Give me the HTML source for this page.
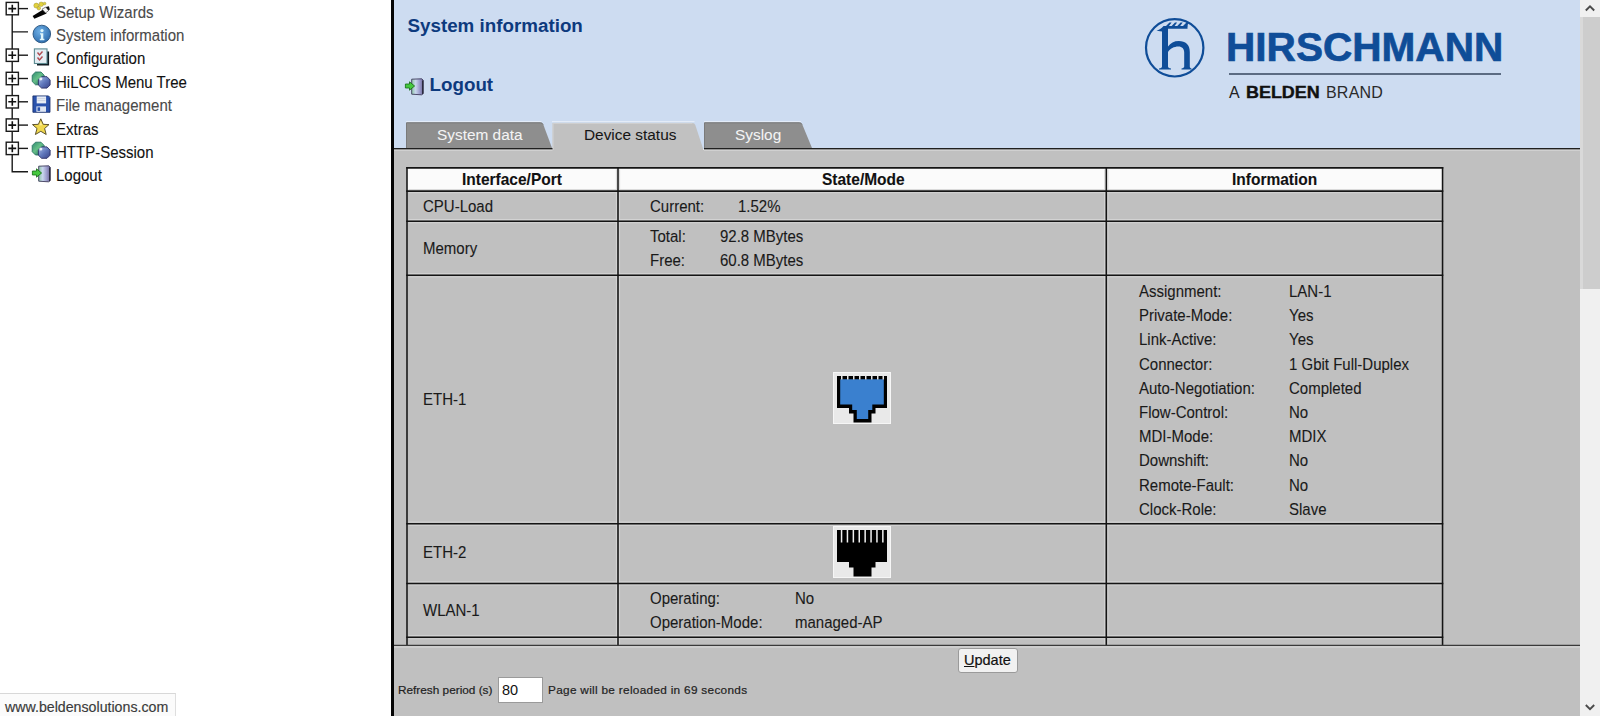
<!DOCTYPE html>
<html><head><meta charset="utf-8">
<style>
*{margin:0;padding:0;box-sizing:border-box}
html,body{width:1600px;height:716px;overflow:hidden;background:#fff;font-family:"Liberation Sans",sans-serif;color:#1a1a1a}
.a{position:absolute}
.t{position:absolute;white-space:nowrap;font-size:15px;line-height:18px}
/* tree */
.box{position:absolute;left:6px;width:13px;height:13px;border:1px solid #222;background:#fff}
.box:before{content:"";position:absolute;left:2px;top:5px;width:7px;height:1px;background:#111}
.box:after{content:"";position:absolute;left:5px;top:2px;width:1px;height:7px;background:#111}
.hl{position:absolute;height:1px;background:#222}
.vl{position:absolute;width:1px;background:#222}
.ico{position:absolute;left:32px;width:18px;height:18px}
.tt{position:absolute;left:56px;white-space:nowrap;font-size:15px;line-height:18px;color:#111;-webkit-text-stroke:0.1px currentColor;transform:translateY(0.6px) scaleY(1.08);transform-origin:0 8.8px}
.tg{color:#4a4a4a}
/* header */
#hdr{left:394px;top:0;width:1186px;height:149px;background:#cddcf1}
.tab{position:absolute;top:122px;height:25px;font-size:15.4px;line-height:25px;white-space:nowrap;-webkit-text-stroke:0.05px currentColor}
/* table */
.bl{position:absolute;background:#222}
.cell{position:absolute;font-size:15px;line-height:18px;white-space:nowrap;color:#1a1a1a;-webkit-text-stroke:0.1px currentColor;transform:translateY(0.6px) scaleY(1.08);transform-origin:0 8.8px}
</style></head><body>

<!-- LEFT TREE -->
<div class="a" style="left:0;top:0;width:391px;height:716px;background:#fff">
<svg class="a" style="left:0;top:0" width="30" height="190" viewBox="0 0 30 190"><g stroke="#1a1a1a" stroke-width="1.4" fill="none"><path d="M12.2,8.6 L12.2,171.7 L28,171.7 M12.2,31.9 L28,31.9"/><rect x="6.2" y="2.4" width="12.2" height="12.4" fill="#fff"/><path d="M18.4,8.6 L28,8.6"/><path d="M8.3,8.6 L16.2,8.6 M12.3,4.7 L12.3,12.5" stroke-width="1.6" stroke="#111"/><rect x="6.2" y="49.0" width="12.2" height="12.4" fill="#fff"/><path d="M18.4,55.2 L28,55.2"/><path d="M8.3,55.2 L16.2,55.2 M12.3,51.3 L12.3,59.1" stroke-width="1.6" stroke="#111"/><rect x="6.2" y="72.3" width="12.2" height="12.4" fill="#fff"/><path d="M18.4,78.5 L28,78.5"/><path d="M8.3,78.5 L16.2,78.5 M12.3,74.6 L12.3,82.4" stroke-width="1.6" stroke="#111"/><rect x="6.2" y="95.6" width="12.2" height="12.4" fill="#fff"/><path d="M18.4,101.8 L28,101.8"/><path d="M8.3,101.8 L16.2,101.8 M12.3,97.9 L12.3,105.7" stroke-width="1.6" stroke="#111"/><rect x="6.2" y="118.9" width="12.2" height="12.4" fill="#fff"/><path d="M18.4,125.1 L28,125.1"/><path d="M8.3,125.1 L16.2,125.1 M12.3,121.2 L12.3,129.0" stroke-width="1.6" stroke="#111"/><rect x="6.2" y="142.2" width="12.2" height="12.4" fill="#fff"/><path d="M18.4,148.4 L28,148.4"/><path d="M8.3,148.4 L16.2,148.4 M12.3,144.5 L12.3,152.3" stroke-width="1.6" stroke="#111"/></g></svg>
<!-- tree icons -->
<svg class="a" style="left:0;top:0" width="60" height="190" viewBox="0 0 60 190">
  <defs>
    <linearGradient id="gG" x1="0" y1="0" x2="1" y2="1"><stop offset="0" stop-color="#2f8a72"/><stop offset="0.45" stop-color="#66c088"/><stop offset="1" stop-color="#17605a"/></linearGradient>
    <linearGradient id="gB" x1="0" y1="0" x2="1" y2="1"><stop offset="0" stop-color="#a9bde6"/><stop offset="0.5" stop-color="#6078bc"/><stop offset="1" stop-color="#3a4488"/></linearGradient>
    <radialGradient id="gI" cx="0.4" cy="0.35" r="0.7"><stop offset="0" stop-color="#6fb0e6"/><stop offset="1" stop-color="#2b6aab"/></radialGradient>
    <linearGradient id="gD" x1="0" y1="0" x2="1" y2="0"><stop offset="0" stop-color="#8fc9a8"/><stop offset="0.35" stop-color="#c9d6ee"/><stop offset="0.7" stop-color="#9c9ccc"/><stop offset="1" stop-color="#6f6a9a"/></linearGradient>
  </defs>
  <!-- wand -->
  <g fill="#e2d23e" stroke="#8a8030" stroke-width="0.4"><circle cx="36.3" cy="5.6" r="2.5"/><circle cx="41.2" cy="4.3" r="2.3"/><circle cx="38.8" cy="8.2" r="1.8"/><circle cx="44.6" cy="3.6" r="1.4"/></g>
  <path d="M32.6,16 L43.2,9.6 L46.6,13.4 L34.4,18.8 Z" fill="#050505"/>
  <path d="M42,9.2 L45.8,7 L48.6,10.6 L45.6,13 Z" fill="#f6f6f6" stroke="#333" stroke-width="0.6"/>
  <path d="M45.8,7 L48.9,6.2 L49.8,9.6 L48.6,10.6 Z" fill="#111"/>
  <!-- info -->
  <circle cx="41.8" cy="34" r="8.8" fill="url(#gI)" stroke="#27527e" stroke-width="0.9"/>
  <circle cx="42" cy="30.6" r="1.6" fill="#dff6fb"/>
  <path d="M40,33.3 L43.3,33.3 L43.3,38.8 L44.4,38.8 L44.4,40.2 L39.8,40.2 L39.8,38.8 L40.9,38.8 L40.9,34.5 L40,34.5 Z" fill="#dff6fb"/>
  <!-- configuration -->
  <path d="M46.5,51.5 L49.1,51.5 L49.1,65.5 L37,65.5 L37,62.5 L46.5,62.5 Z" fill="#0f1a22"/>
  <rect x="34.4" y="48.9" width="12.6" height="14.6" fill="#e4eef4" stroke="#5d8b92" stroke-width="1.1"/>
  <path d="M37.5,52.5 L39.5,55 L42.5,51.5 M37.5,57.5 L39.5,60 L42.5,56.5" fill="none" stroke="#b04a50" stroke-width="1.4"/>
  <g transform="translate(0,0)">
  <path d="M35.5,72 L41,72 L44.2,75.3 L44.2,81.5 L41,84.8 L35.5,84.8 L32.2,81.5 L32.2,75.3 Z" fill="url(#gG)" stroke="#1f6a5a" stroke-width="0.8"/>
  <path d="M41.6,76.7 L47,76.7 L50.1,80 L50.1,85 L47,88.1 L41.6,88.1 L38.4,85 L38.4,80 Z" fill="url(#gB)" stroke="#2a2f66" stroke-width="0.9"/>
  <circle cx="40.8" cy="78.8" r="1.6" fill="#f4f8ff" opacity="0.9"/>
</g>
  <g transform="translate(0,70.2)">
  <path d="M35.5,72 L41,72 L44.2,75.3 L44.2,81.5 L41,84.8 L35.5,84.8 L32.2,81.5 L32.2,75.3 Z" fill="url(#gG)" stroke="#1f6a5a" stroke-width="0.8"/>
  <path d="M41.6,76.7 L47,76.7 L50.1,80 L50.1,85 L47,88.1 L41.6,88.1 L38.4,85 L38.4,80 Z" fill="url(#gB)" stroke="#2a2f66" stroke-width="0.9"/>
  <circle cx="40.8" cy="78.8" r="1.6" fill="#f4f8ff" opacity="0.9"/>
</g>
  <!-- floppy -->
  <path d="M32.9,95.9 L48.5,95.9 L50,97.4 L50,112.3 L32.9,112.3 Z" fill="#2a52ac" stroke="#142a66" stroke-width="0.8"/>
  <rect x="36.7" y="96.4" width="9.4" height="7" fill="#e6ecf4"/>
  <path d="M37.5,98.5 L45.5,98.5 M37.5,100.5 L45.5,100.5" stroke="#c0c8d8" stroke-width="0.6"/>
  <rect x="36.4" y="106.4" width="9.6" height="5.4" fill="#dfe6f2"/>
  <rect x="37.5" y="107.3" width="2.6" height="3.6" fill="#2a52ac"/>
  <!-- star -->
  <path d="M40.8,118.8 L43.2,124.3 L49,124.6 L44.6,128.5 L46.2,134.5 L40.8,131.3 L35.4,134.5 L37,128.5 L32.5,124.6 L38.4,124.3 Z" fill="#f0d84e" stroke="#4e4420" stroke-width="0.9" stroke-linejoin="round"/>
  <path d="M40.8,121.5 L42.3,125.3 L39.3,125.6 Z" fill="#fff3a8" opacity="0.8"/>
  <!-- logout -->
  <path d="M38.7,166.2 L48.8,165.8 L50.1,167.2 L50.1,180.8 L48.5,181.8 L38.7,181.2 Z" fill="url(#gD)" stroke="#3d3a5a" stroke-width="0.9"/>
  <path d="M49.2,167.5 L50.4,167.5 L50.4,180.5 L49.2,181.2 Z" fill="#1d1d2c"/>
  <path d="M32.4,171 L36.5,171 L36.5,168.8 L41.6,173 L36.5,177.2 L36.5,175 L32.4,175 Z" fill="#45c83e" stroke="#136a12" stroke-width="0.8"/>
</svg>
  <div class="tt tg" style="top:2.7px">Setup Wizards</div>
  <div class="tt tg" style="top:26.1px">System information</div>
  <div class="tt" style="top:49.4px">Configuration</div>
  <div class="tt" style="top:72.8px">HiLCOS Menu Tree</div>
  <div class="tt tg" style="top:96.1px">File management</div>
  <div class="tt" style="top:119.5px">Extras</div>
  <div class="tt" style="top:142.8px">HTTP-Session</div>
  <div class="tt" style="top:166.2px">Logout</div>

  <!-- status bar -->
  <div class="a" style="left:0;top:693px;width:176px;height:23px;background:#fbfbfb;border-top:1px solid #d8d8d8;border-right:1px solid #dedede"></div>
  <div class="t" style="left:5px;top:698px;font-size:14.2px;color:#3a3a3a;-webkit-text-stroke:0.15px #3a3a3a">www.beldensolutions.com</div>
</div>

<!-- divider -->
<div class="a" style="left:391px;top:0;width:3px;height:716px;background:#050505"></div>

<!-- HEADER -->
<div id="hdr" class="a"></div>
<div class="t" style="left:407.5px;top:14.6px;font-size:18.8px;line-height:22px;font-weight:bold;color:#0d3a7e">System information</div>
<svg class="a" style="left:373px;top:-87.3px" width="60" height="190" viewBox="0 0 60 190">
  <path d="M38.7,166.2 L48.8,165.8 L50.1,167.2 L50.1,180.8 L48.5,181.8 L38.7,181.2 Z" fill="url(#gD)" stroke="#3d3a5a" stroke-width="0.9"/>
  <path d="M49.2,167.5 L50.4,167.5 L50.4,180.5 L49.2,181.2 Z" fill="#1d1d2c"/>
  <path d="M32.4,171 L36.5,171 L36.5,168.8 L41.6,173 L36.5,177.2 L36.5,175 L32.4,175 Z" fill="#45c83e" stroke="#136a12" stroke-width="0.8"/>
</svg>
<div class="t" style="left:429.5px;top:74.3px;font-size:18.8px;line-height:22px;font-weight:bold;color:#0d3a7e">Logout</div>

<!-- header bottom line -->


<!-- content gray -->
<div class="a" style="left:394px;top:150px;width:1186px;height:495px;background:#c0c0c0"></div>

<div class="a" style="left:394px;top:647px;width:1186px;height:69px;background:#c0c0c0"></div>

<!-- TABLE -->
<div class="a" style="left:407px;top:167px;width:1035px;height:24px;background:#fbfbfb"></div>
<!-- horizontal lines -->
<!-- vertical lines -->

<svg class="a" style="left:0;top:0" width="1600" height="646" viewBox="0 0 1600 646">
<g stroke="#d6d6d6" stroke-width="0.9" fill="none"><path d="M408.5,189.50 H1441.05 M408.5,192.70 H1441.05"/><path d="M408.5,219.55 H1441.05 M408.5,222.75 H1441.05"/><path d="M408.5,273.70 H1441.05 M408.5,276.90 H1441.05"/><path d="M408.5,522.06 H1441.05 M408.5,525.26 H1441.05"/><path d="M408.5,581.80 H1441.05 M408.5,585.00 H1441.05"/><path d="M408.5,635.65 H1441.05 M408.5,638.85 H1441.05"/><path d="M616.40,169.35 V645 M619.60,169.35 V645"/><path d="M1104.70,169.35 V645 M1107.90,169.35 V645"/></g>
<g stroke="#141414" stroke-width="1.55" fill="none"><path d="M406.25,167.85 H1443.3"/><path d="M406.25,191.1 H1443.3"/><path d="M406.25,221.15 H1443.3"/><path d="M406.25,275.3 H1443.3"/><path d="M406.25,523.66 H1443.3"/><path d="M406.25,583.4 H1443.3"/><path d="M406.25,637.25 H1443.3"/><path d="M407.0,167.1 V645"/><path d="M618.0,167.1 V645"/><path d="M1106.3,167.1 V645"/><path d="M1442.55,167.1 V645"/></g></svg>
<!-- header texts -->
<div class="cell" style="left:462px;top:170px;font-weight:bold;font-size:15.5px;color:#111">Interface/Port</div>
<div class="cell" style="left:822px;top:170px;font-weight:bold;font-size:15.5px;color:#111">State/Mode</div>
<div class="cell" style="left:1232px;top:170px;font-weight:bold;font-size:15.5px;color:#111">Information</div>

<div class="cell" style="left:423px;top:197px">CPU-Load</div>
<div class="cell" style="left:650px;top:197px">Current:</div>
<div class="cell" style="left:738px;top:197px">1.52%</div>

<div class="cell" style="left:423px;top:239px">Memory</div>
<div class="cell" style="left:650px;top:227px">Total:</div>
<div class="cell" style="left:720px;top:227px">92.8 MBytes</div>
<div class="cell" style="left:650px;top:251px">Free:</div>
<div class="cell" style="left:720px;top:251px">60.8 MBytes</div>

<div class="cell" style="left:423px;top:390px">ETH-1</div>
<div class="cell" style="left:423px;top:543px">ETH-2</div>
<div class="cell" style="left:423px;top:601px">WLAN-1</div>

<div class="cell" style="left:650px;top:589px">Operating:</div>
<div class="cell" style="left:795px;top:589px">No</div>
<div class="cell" style="left:650px;top:613px">Operation-Mode:</div>
<div class="cell" style="left:795px;top:613px">managed-AP</div>


<!-- info rows -->
<div class="cell" style="left:1139px;top:282.0px">Assignment:</div>
<div class="cell" style="left:1289px;top:282.0px">LAN-1</div>
<div class="cell" style="left:1139px;top:306.2px">Private-Mode:</div>
<div class="cell" style="left:1289px;top:306.2px">Yes</div>
<div class="cell" style="left:1139px;top:330.4px">Link-Active:</div>
<div class="cell" style="left:1289px;top:330.4px">Yes</div>
<div class="cell" style="left:1139px;top:354.6px">Connector:</div>
<div class="cell" style="left:1289px;top:354.6px">1 Gbit Full-Duplex</div>
<div class="cell" style="left:1139px;top:378.8px">Auto-Negotiation:</div>
<div class="cell" style="left:1289px;top:378.8px">Completed</div>
<div class="cell" style="left:1139px;top:403.0px">Flow-Control:</div>
<div class="cell" style="left:1289px;top:403.0px">No</div>
<div class="cell" style="left:1139px;top:427.2px">MDI-Mode:</div>
<div class="cell" style="left:1289px;top:427.2px">MDIX</div>
<div class="cell" style="left:1139px;top:451.4px">Downshift:</div>
<div class="cell" style="left:1289px;top:451.4px">No</div>
<div class="cell" style="left:1139px;top:475.6px">Remote-Fault:</div>
<div class="cell" style="left:1289px;top:475.6px">No</div>
<div class="cell" style="left:1139px;top:499.8px">Clock-Role:</div>
<div class="cell" style="left:1289px;top:499.8px">Slave</div>

<!-- TABS -->
<svg class="a" style="left:394px;top:118px" width="440" height="32">
  <path d="M12,3.6 H147.5 M158,3.6 H300.5 M310,3.6 H407" stroke="#e6eef9" stroke-width="1"/>
  <path d="M12.5,4.5 L146.5,4.5 Q148.5,4.5 149.3,6.5 L158,30 L12.5,30 Z" fill="#8e8e8e"/>
  <path d="M12.5,30 L12.5,4.8 L146.5,4.8 Q148.3,4.8 149,6.5" fill="none" stroke="#7a7a7a" stroke-width="1"/>
  <path d="M158.5,5 L298.5,5 Q300.5,5 301.3,7 L309.5,32 L158.5,32 Z" fill="#c1c1c1"/>
  <path d="M159,32 L159,5.3 L298.5,5.3" fill="none" stroke="#d3d3d3" stroke-width="1"/>
  <path d="M310.5,4.5 L405.5,4.5 Q407.5,4.5 408.3,6.5 L418,30 L310.5,30 Z" fill="#8e8e8e"/>
  <path d="M310.5,30 L310.5,4.8 L405.5,4.8 Q407.3,4.8 408,6.5" fill="none" stroke="#7a7a7a" stroke-width="1"/>
</svg>


<svg class="a" style="left:394px;top:143px" width="1186" height="10"><path d="M0,5.7 H158.5 M310,5.7 H1186" stroke="#202020" stroke-width="1.5"/><path d="M0,7.4 H158.5 M310,7.4 H1186" stroke="#d4d4d4" stroke-width="0.9"/></svg>
<div class="tab" style="left:437px;color:#f4f4f4">System data</div>
<div class="tab" style="left:584px;color:#151515">Device status</div>
<div class="tab" style="left:735px;color:#f4f4f4">Syslog</div>

<!-- LOGO -->
<svg class="a" style="left:1140px;top:14px" width="70" height="68" viewBox="0 0 70 68">
  <circle cx="34.7" cy="33.8" r="28.7" fill="none" stroke="#0f4d98" stroke-width="2.2"/>
  <g fill="#0f4d98">
  <path d="M22,16.5 L28,16.5 L28,52.5 C28,53.5 29,54 31,54.6 L31,55.6 L19,55.6 L19,54.6 C21,54 22,53.5 22,52.5 Z"/>
  <path d="M28,32.5 C30.5,29 34,27 38.8,27 C45.5,27 49.8,30.5 49.8,38 L49.8,52.5 C49.8,53.5 50.5,54 51.5,54.6 L51.5,55.6 L41.5,55.6 L41.5,54.6 C43,54 44.2,53.5 44.2,52.5 L44.2,38.5 C44.2,34.5 42,32.4 38.5,32.4 C34,32.4 30,34.5 28,38 Z"/>
  <path d="M23.5,12 L47.5,12 L47.5,14.8 L28,14.8 L28,17.5 L22,17.5 L16.5,16.8 C19,15.8 21.5,14.5 23.5,12 Z"/>
  <path d="M25.5,12.5 L29.5,8.6 L31.6,8.6 L28.6,12.5 Z M31.2,12.5 L35,8.6 L37.1,8.6 L34.2,12.5 Z M36.8,12.5 L40.6,8.6 L42.7,8.6 L39.8,12.5 Z M42.5,12.5 L46.5,8.6 L48.2,8.6 L47.5,12.5 Z"/>
  </g>
</svg>
<div class="t" style="left:1226px;top:25px;font-size:40.6px;line-height:44px;font-weight:bold;color:#0f4d98;-webkit-text-stroke:0.7px #0f4d98">HIRSCHMANN</div>
<div class="a" style="left:1229px;top:73px;width:272px;height:2px;background:#5b6b82"></div>
<div class="t" style="left:1229px;top:83.5px;font-size:16px;line-height:18px;color:#222">A</div>
<div class="t" style="left:1246px;top:83.5px;font-size:16px;line-height:18px;color:#111;font-weight:bold;transform:scaleX(1.12);transform-origin:0 0;-webkit-text-stroke:0.4px #111">BELDEN</div>
<div class="t" style="left:1326px;top:83.5px;font-size:16px;line-height:18px;color:#2a2a2a;letter-spacing:0.2px">BRAND</div>

<!-- PORT ICONS -->
<svg class="a" style="left:833px;top:372px" width="58" height="52" viewBox="0 0 58 52">
  <rect x="0.5" y="0.5" width="57" height="51" fill="#e9e9e9" stroke="#f6f6f6"/>
  <path d="M4,4 L54,4 L54,36 L42.5,36 L42.5,41.5 L38.5,41.5 L38.5,50.5 L20.5,50.5 L20.5,41.5 L16,41.5 L16,36 L4,36 Z" fill="#000"/>
  <path d="M7.2,7.2 L50.8,7.2 L50.8,32.5 L39.3,32.5 L39.3,38 L35.2,38 L35.2,47.1 L23.8,47.1 L23.8,38 L19.2,38 L19.2,32.5 L7.2,32.5 Z" fill="#3a80cf"/>
  <g fill="#e6e6e6"><rect x="8" y="4" width="1.5" height="3.5"/><rect x="14" y="4" width="1.5" height="3.5"/><rect x="20" y="4" width="1.5" height="3.5"/><rect x="26" y="4" width="1.5" height="3.5"/><rect x="32" y="4" width="1.5" height="3.5"/><rect x="38" y="4" width="1.5" height="3.5"/><rect x="44" y="4" width="1.5" height="3.5"/><rect x="49.5" y="4" width="1.5" height="3.5"/></g>
</svg>
<svg class="a" style="left:833px;top:525.5px" width="58" height="52" viewBox="0 0 58 52">
  <rect x="0.5" y="0.5" width="57" height="51" fill="#e9e9e9" stroke="#f6f6f6"/>
  <path d="M4,4 L54,4 L54,36 L42.5,36 L42.5,41.5 L38.5,41.5 L38.5,50.5 L20.5,50.5 L20.5,41.5 L16,41.5 L16,36 L4,36 Z" fill="#000"/>
  <g fill="#f0f0f0"><rect x="7.8" y="4" width="1.5" height="12.5"/><rect x="13.7" y="4" width="1.5" height="12.5"/><rect x="19.6" y="4" width="1.5" height="12.5"/><rect x="25.5" y="4" width="1.5" height="12.5"/><rect x="31.4" y="4" width="1.5" height="12.5"/><rect x="37.3" y="4" width="1.5" height="12.5"/><rect x="43.2" y="4" width="1.5" height="12.5"/><rect x="49.1" y="4" width="1.5" height="12.5"/></g>
</svg>

<svg class="a" style="left:394px;top:640px" width="1186" height="10"><path d="M0,5.55 H1186" stroke="#3a3a3a" stroke-width="1.4"/><path d="M0,7.3 H1186" stroke="#d2d2d2" stroke-width="0.9"/></svg>
<!-- FOOTER -->
<div class="a" style="left:958px;top:648px;width:60px;height:25px;background:#f1f1f1;border:1px solid #9a9a9a;border-radius:3px"></div>
<div class="t" style="left:964px;top:651px;font-size:14.5px;line-height:18px;color:#111;-webkit-text-stroke:0.2px #111"><u>U</u>pdate</div>
<div class="t" style="left:398px;top:683px;font-size:11.8px;line-height:14px;color:#222;-webkit-text-stroke:0.2px #222">Refresh period (s)</div>
<div class="a" style="left:498px;top:677px;width:45px;height:26px;background:#fff;border:1px solid #9a9a9a"></div>
<div class="t" style="left:502px;top:681px;font-size:14.5px;line-height:18px;color:#111">80</div>
<div class="t" style="left:548px;top:683px;font-size:11.8px;line-height:14px;color:#222;letter-spacing:0.3px;-webkit-text-stroke:0.2px #222">Page will be reloaded in 69 seconds</div>

<!-- SCROLLBAR -->
<div class="a" style="left:1580px;top:0;width:20px;height:716px;background:#f0f0f0"></div>
<div class="a" style="left:1580px;top:17px;width:20px;height:272px;background:#cdcdcd"></div><div class="a" style="left:1580px;top:17px;width:3px;height:272px;background:#d9d9d9"></div>
<svg class="a" style="left:1580px;top:0" width="20" height="17"><path d="M5.8,10.5 L10,6.3 L14.2,10.5" fill="none" stroke="#4a4a4a" stroke-width="1.9"/></svg>
<svg class="a" style="left:1580px;top:699px" width="20" height="17"><path d="M5.8,6 L10,10.2 L14.2,6" fill="none" stroke="#4a4a4a" stroke-width="1.9"/></svg>

</body></html>
